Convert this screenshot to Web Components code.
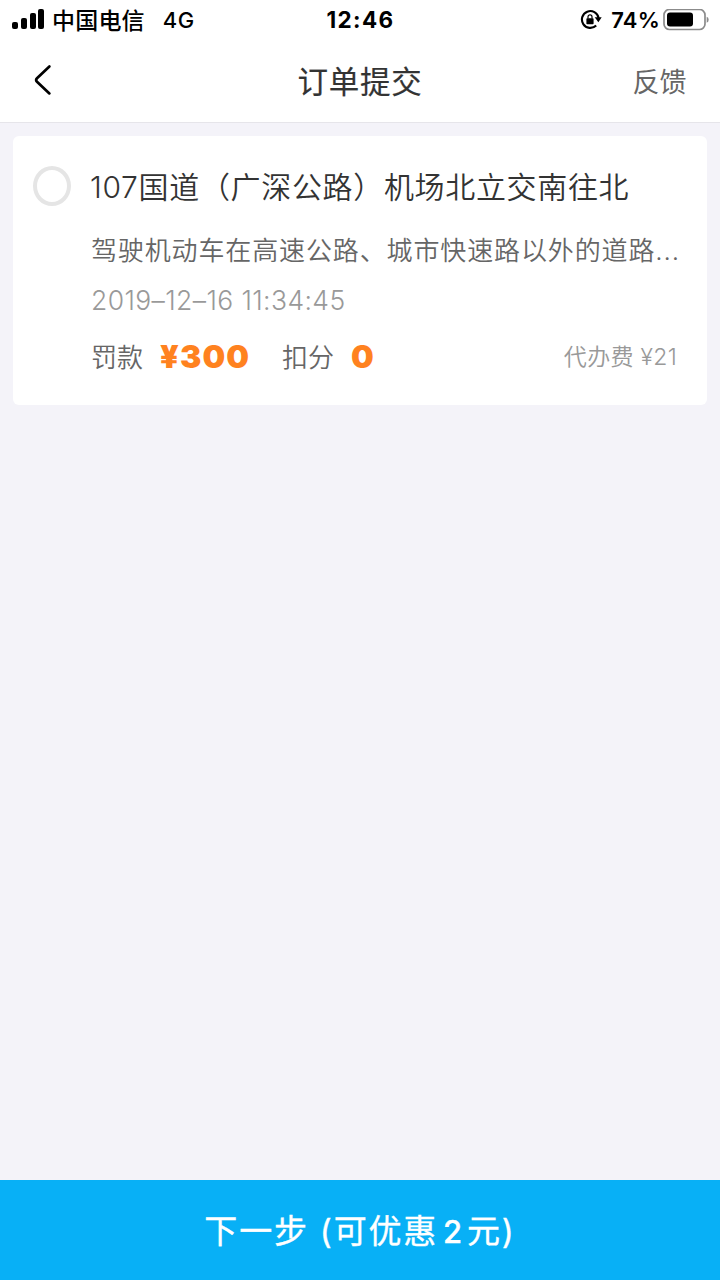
<!DOCTYPE html>
<html lang="zh-CN">
<head>
<meta charset="utf-8">
<title>订单提交</title>
<style>
html,body{margin:0;height:100%}
body{font-family:Inter,"Noto Sans CJK SC",sans-serif;background:#f4f3f9;color:#000}
</style>
</head>
<body>
<order-page></order-page>
<script>
function define(name, html) {
  const template = document.createElement('template');
  template.innerHTML = html;
  customElements.define(name, class extends HTMLElement {
    constructor() {
      super();
      this.attachShadow({mode: 'open'}).append(template.content.cloneNode(true));
    }
  });
}

define('status-bar', `
<style>
:host{display:grid;grid-template-columns:1fr auto 1fr;align-items:center;height:40px;background:#fff;line-height:40px;white-space:nowrap}
.left,.right{display:flex;align-items:center}
.left{padding-left:12px}
.right{justify-content:flex-end;padding-right:11px}
svg{display:block;flex:none}
.carrier{font:500 23px/38px "Noto Sans CJK SC",sans-serif;margin:0 0 2px 7px;letter-spacing:.2px}
.net{font-size:22px;font-weight:500;margin-left:18px;letter-spacing:.6px}
.time{font-size:22.5px;font-weight:700;letter-spacing:1.4px;margin-left:1px}
.pct{font-size:22px;font-weight:600;margin:0 3px 0 9px;letter-spacing:.2px}
</style>
<div class="left">
<svg width="33" height="22" viewBox="0 0 33 22"><rect x="0" y="13" width="6" height="7" rx="2"/><rect x="9" y="9" width="6" height="11" rx="2"/><rect x="18" y="4" width="6" height="16" rx="2"/><rect x="26" y="0" width="6" height="20" rx="2"/></svg>
<span class="carrier">中国电信</span><span class="net">4G</span></div>
<span class="time">12:46</span>
<div class="right">
<svg width="22" height="22" viewBox="0 0 22 22"><path d="M16.2 16.5A8.4 8.4 0 1 1 18.6 9" fill="none" stroke="#000" stroke-width="2.1"/><path d="M14.7 8.3h7l-3.3 5z"/><rect x="6.4" y="9.2" width="7.2" height="6" rx=".8"/><path d="M8 9.6V7.8a2 2 0 0 1 4 0V9.6" fill="none" stroke="#000" stroke-width="1.2"/></svg>
<span class="pct">74%</span>
<svg width="46" height="22" viewBox="0 0 46 22"><rect x="1" y=".5" width="41" height="20" rx="5.5" fill="none" stroke="#8b8b8b" stroke-width="1.7"/><rect x="4" y="3.5" width="26" height="14" rx="3"/><path d="M43.7 7.7q2 .6 2 3t-2 3z" fill="#8b8b8b"/></svg>
</div>`);

define('nav-bar', `
<style>
:host{display:grid;grid-template-columns:1fr auto 1fr;align-items:center;height:82px;background:#fff;border-bottom:1px solid #e6e5ea;font-family:"Noto Sans CJK SC",sans-serif}
svg{display:block;margin:0 0 2px 32px}
.title{font-size:30.5px;font-weight:400;-webkit-text-stroke:.2px #333;color:#333;letter-spacing:.7px;line-height:80px;padding-bottom:2px}
.action{justify-self:end;margin-right:33.5px;font-size:27px;color:#666;line-height:80px}
</style>
<svg width="22" height="34" viewBox="0 0 22 34"><path d="M17.4 3.5 5 15.2Q3.2 17 5 18.8L17.4 30.4" fill="none" stroke="#000" stroke-width="2.7" stroke-linecap="round"/></svg>
<span class="title"><slot></slot></span>
<span class="action"><slot name="action"></slot></span>`);

define('violation-card', `
<style>
:host{display:grid;grid-template-columns:77px 1fr;margin:13px 13px 0;height:269px;background:#fff;border-radius:6px;white-space:nowrap;font-weight:350}
.radio{box-sizing:border-box;width:38px;height:40px;margin:30px 0 0 20px;border:4px solid #e5e5e5;border-radius:50%}
.body{display:flex;flex-direction:column;padding-top:30px}
.place{font-size:30px;line-height:42px;color:#333;letter-spacing:.67px}
.reason{font-size:26px;line-height:40px;color:#666;margin:23px 0 0 1px;letter-spacing:.87px}
.date{font-size:26.5px;font-weight:300;line-height:36px;color:#999;margin:11px 0 0 1px;letter-spacing:.4px}
.cost{display:flex;align-items:center;height:40px;margin:20px 0 0 1px;font-size:26px;line-height:40px;color:#666}
.num{font-weight:900;color:#ff821f;font-size:32px;letter-spacing:1.1px;line-height:38px;padding-bottom:2px}
.fine{width:92px;margin:0 30px 0 17px}
.points{margin-left:17px}
.fee{margin:0 30px 0 auto;font-size:23px;color:#999;letter-spacing:.3px;line-height:38px;padding-bottom:2px}
</style>
<div class="radio"></div>
<div class="body">
<div class="place"><slot name="place"></slot></div>
<div class="reason"><slot name="reason"></slot></div>
<div class="date"><slot name="date"></slot></div>
<div class="cost"><span>罚款</span><span class="num fine"><slot name="fine"></slot></span><span>扣分</span><span class="num points"><slot name="points"></slot></span><span class="fee"><slot name="fee"></slot></span></div>
</div>`);

define('next-button', `
<style>
:host{display:flex;align-items:center;justify-content:center;box-sizing:border-box;height:100px;padding-top:2px;margin-top:auto;background:#08b0f6;color:#fff;font-size:33px;font-weight:400;-webkit-text-stroke:.35px #fff;letter-spacing:1.8px;line-height:98px;white-space:nowrap}
::slotted(b){font-weight:500;font-size:31px;margin:0 3px 0 5px}
</style><span><slot></slot></span>`);

define('order-page', `
<style>:host{display:flex;flex-direction:column;height:100vh;overflow:hidden;background:#f4f3f9}</style>
<status-bar></status-bar>
<nav-bar>订单提交<span slot="action">反馈</span></nav-bar>
<violation-card>
<span slot="place">107国道（广深公路）机场北立交南往北</span>
<span slot="reason">驾驶机动车在高速公路、城市快速路以外的道路...</span>
<span slot="date">2019–12–16 11:34:45</span>
<span slot="fine">¥300</span>
<span slot="points">0</span>
<span slot="fee">代办费 ¥21</span>
</violation-card>
<next-button>下一步 (可优惠<b>2</b>元)</next-button>`);
</script>
</body>
</html>
